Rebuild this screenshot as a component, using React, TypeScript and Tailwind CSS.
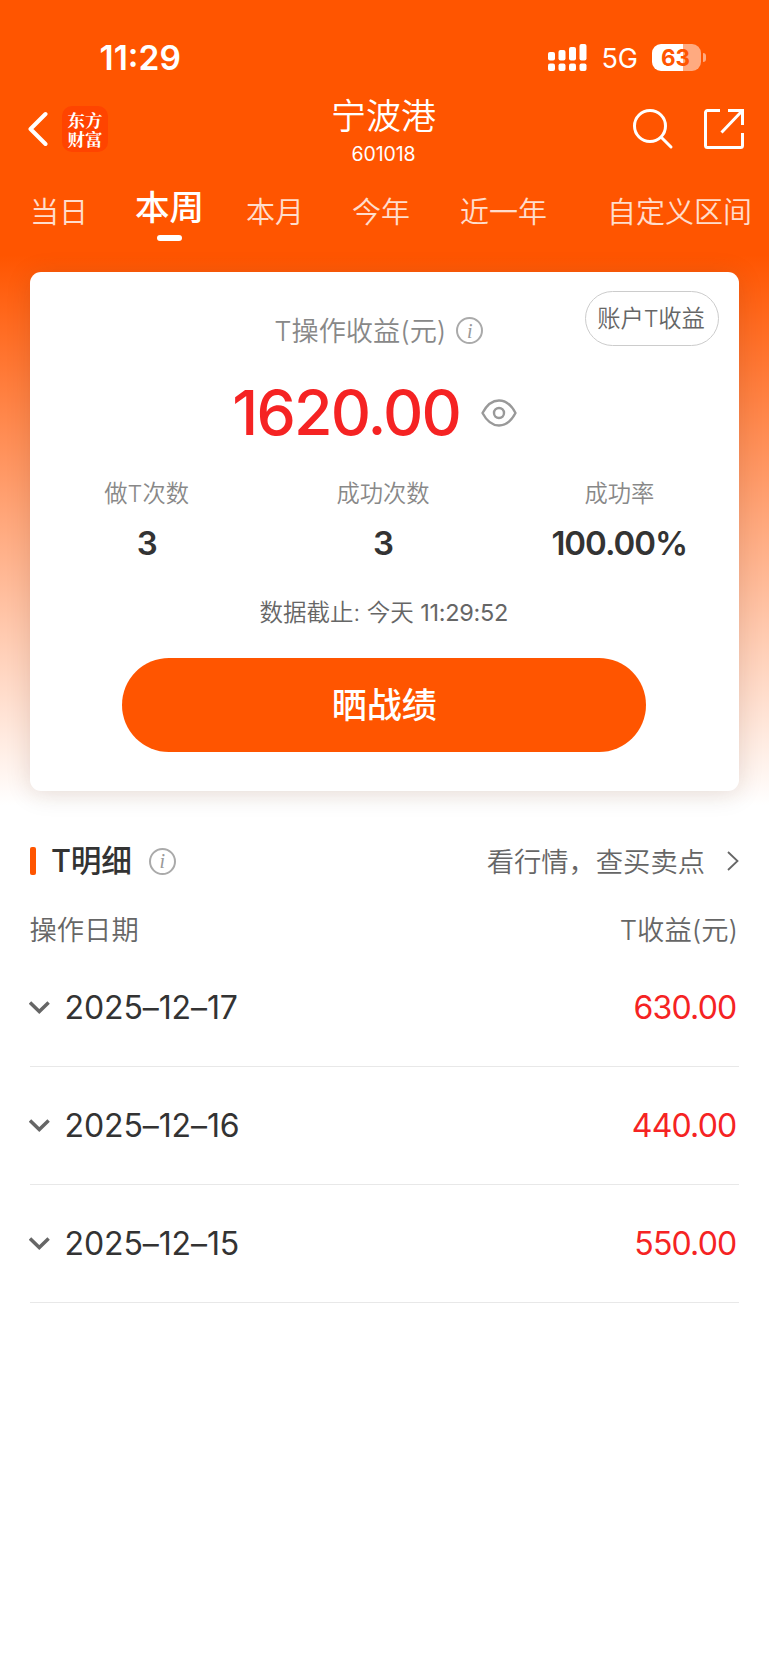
type Tab = { label: string; left: string };

const TABS: Tab[] = [
  { label: "当日", left: "ml-[30px]" },
  { label: "本周", left: "ml-[47px]" },
  { label: "本月", left: "ml-[42px]" },
  { label: "今年", left: "ml-[48px]" },
  { label: "近一年", left: "ml-[50px]" },
  { label: "自定义区间", left: "ml-[60px]" },
];

const STATS = [
  { label: "做T次数", value: "3" },
  { label: "成功次数", value: "3" },
  { label: "成功率", value: "100.00%" },
];

const RECORDS = [
  { date: "2025–12–17", profit: "630.00" },
  { date: "2025–12–16", profit: "440.00" },
  { date: "2025–12–15", profit: "550.00" },
];

function SignalIcon() {
  return (
    <svg width="39" height="28" viewBox="0 0 39 28" fill="currentColor">
      <rect x="0" y="8" width="7" height="8.5" rx="2" />
      <rect x="10.5" y="6" width="7" height="10.5" rx="2" />
      <rect x="21" y="3" width="7" height="13.5" rx="2" />
      <rect x="31.5" y="0" width="7" height="16.5" rx="2" />
      <rect x="0" y="19.5" width="7" height="7.5" rx="2" />
      <rect x="10.5" y="19.5" width="7" height="7.5" rx="2" />
      <rect x="21" y="19.5" width="7" height="7.5" rx="2" />
      <rect x="31.5" y="19.5" width="7" height="7.5" rx="2" />
    </svg>
  );
}

function Battery() {
  return (
    <div className="flex items-center gap-[2px]">
      <div className="flex h-[27px] w-[49px] items-center justify-center rounded-[9px] bg-[linear-gradient(to_right,#fff_31px,#ffaa80_31px)] pt-px pr-[2px] text-[22.5px] font-bold leading-none text-[#ff5500]">
        63
      </div>
      <div className="h-[9px] w-[3px] rounded-r-full bg-[#ffaa80]" />
    </div>
  );
}

function StatusBar() {
  return (
    <div className="flex h-[96px] items-center pt-[19px] pl-[99.5px] pr-[63px] text-white">
      <span className="pt-[2px] text-[33.5px] font-semibold leading-none">11:29</span>
      <div className="ml-auto flex items-center">
        <SignalIcon />
        <span className="ml-[14px] mr-[14px] pt-[2px] text-[27px] leading-none">5G</span>
        <Battery />
      </div>
    </div>
  );
}

function TitleBar() {
  return (
    <header className="flex h-[76px] items-center pl-[27px] pr-[24px] text-white">
      <div className="flex w-[200px] items-center pb-[10px]">
        <svg width="21" height="36" viewBox="0 0 21 36" fill="none" stroke="currentColor" strokeWidth="4">
          <path d="M18.500 3 3.500 18 18.500 33" strokeLinecap="round" strokeLinejoin="round" />
        </svg>
        <div className="ml-[14px] flex h-[46px] w-[46px] items-center justify-center rounded-[10px] bg-[#ff4400]">
          <span className="w-[36px] pl-[0.5px] font-['Noto_Serif_CJK_SC','Noto_Sans_CJK_SC',serif] text-[17.5px] font-bold leading-[19px]">
            东方财富
          </span>
        </div>
      </div>
      <div className="flex flex-1 flex-col items-center pr-[5px] pb-[5px]">
        <h1 className="text-[35px] font-[350] leading-[38px]">宁波港</h1>
        <span className="mt-[7px] text-[19.5px] leading-[24px] tracking-[-0.1px]">601018</span>
      </div>
      <div className="flex w-[200px] items-center justify-end pb-[10px]">
        <svg width="42" height="42" viewBox="0 0 42 42" fill="none" stroke="currentColor" strokeWidth="3">
          <circle cx="18" cy="18" r="15.5" />
          <path d="m29.500 29.500 9.500 9.500" strokeLinecap="round" />
        </svg>
        <svg className="ml-[29px]" width="42" height="42" viewBox="0 0 42 42" fill="none" stroke="currentColor" strokeWidth="3">
          <path d="M17 2.500H4.500a2 2 0 0 0-2 2v33a2 2 0 0 0 2 2h33a2 2 0 0 0 2-2V25" />
          <path d="M25 2.500h14.500V17M39 3 18.500 24.500" />
        </svg>
      </div>
    </header>
  );
}

function Tabs({ active }: { active: string }) {
  return (
    <nav className="flex h-[84px] text-white">
      {TABS.map((tab) => (
        <div key={tab.label} className={`flex shrink-0 flex-col items-center ${tab.left}`}>
          {tab.label === active ? (
            <>
              <span className="mt-[15px] text-[34.5px] font-medium leading-[42px]">{tab.label}</span>
              <span className="mt-[6px] h-[6px] w-[25px] rounded-full bg-white" />
            </>
          ) : (
            <span className="mt-[21px] text-[29px] font-[350] leading-[40px] opacity-80">{tab.label}</span>
          )}
        </div>
      ))}
    </nav>
  );
}

function InfoIcon() {
  return (
    <span className="flex h-[27px] w-[27px] items-center justify-center rounded-full border-2 border-[#aaa] font-['Liberation_Serif',serif] text-[20px] italic leading-none text-[#999]">
      i
    </span>
  );
}

function EyeIcon() {
  return (
    <svg width="36" height="28" viewBox="0 0 36 28" fill="none" stroke="#999" strokeWidth="2.4">
      <path d="M1.500 14C6 5.500 11.500 1.500 18 1.500S30 5.500 34.500 14C30 22.500 24.500 26.500 18 26.500S6 22.500 1.500 14Z" strokeLinejoin="round" />
      <circle cx="18" cy="14" r="5" />
    </svg>
  );
}

function SummaryCard() {
  return (
    <section className="relative mr-[30px] ml-[29.5px] flex h-[519.5px] flex-col items-center rounded-[11px] bg-white shadow-[0_3px_24px_rgba(80,40,20,0.15)]">
      <button
        type="button"
        className="absolute top-[19px] right-[20px] flex h-[55px] w-[134px] items-center justify-center rounded-full border border-[#ccc] pt-[3px] pr-[2px] text-[23.3px] font-[350] tracking-[-0.1px] text-[#666]"
      >
        账户T收益
      </button>
      <div className="mt-[39px] flex h-[40px] items-center pr-[11px]">
        <span className="mr-[10px] pt-[3px] text-[27.2px] font-[350] text-[#888]">T操作收益(元)</span>
        <InfoIcon />
      </div>
      <div className="mt-[27px] flex h-[70px] items-center pr-[19px]">
        <span className="mr-[21px] text-[62.5px] font-[550] leading-none tracking-[-1.8px] text-[#f52323]">1620.00</span>
        <EyeIcon />
      </div>
      <div className="mt-[28px] flex w-full pl-[0.5px]">
        {STATS.map((stat) => (
          <div key={stat.label} className="flex w-[236.5px] flex-col items-center pr-[3px]">
            <span className="text-[23.3px] font-[350] leading-[36px] text-[#888]">{stat.label}</span>
            <span className="mt-[11px] text-[33px] font-[560] leading-[40px] tracking-[-1px] text-[#333]">{stat.value}</span>
          </div>
        ))}
      </div>
      <p className="mt-[32px] pr-px text-[23.5px] font-[350] leading-[36px] text-[#666]">
        数据截止: 今天 <span className="font-normal tracking-[-0.3px]">11:29:52</span>
      </p>
      <button
        type="button"
        className="mt-[27px] h-[94px] w-[524px] rounded-full bg-[#ff5500] pt-[2px] text-[35px] font-medium text-white"
      >
        晒战绩
      </button>
    </section>
  );
}

function Details() {
  return (
    <section className="mr-[30px] ml-[29.5px] mt-[50px]">
      <div className="flex h-[40px] items-center">
        <span className="h-[28px] w-[6px] rounded-[2px] bg-[#ff5500]" />
        <h2 className="ml-[15.5px] mr-[17px] pt-px text-[30.7px] font-medium tracking-[-0.2px] text-[#333]">T明细</h2>
        <InfoIcon />
        <a className="ml-auto flex items-center text-[27.3px] font-[350] text-[#666]">
          <span className="pt-[4px]">看行情，查买卖点</span>
          <svg className="ml-[22px]" width="12" height="20" viewBox="0 0 12 20" fill="none" stroke="#666" strokeWidth="1.8">
            <path d="m1 1 9.500 9L1 19" />
          </svg>
        </a>
      </div>
      <div className="mt-[28px] flex h-[40px] items-center justify-between pt-[4px] pr-[1px] text-[27.3px] font-[350] text-[#666]">
        <span>操作日期</span>
        <span>T收益(元)</span>
      </div>
      {RECORDS.map((record) => (
        <div key={record.date} className="flex h-[118px] items-center border-b border-[#e8e8e8] pr-[2.5px] text-[32px]">
          <svg className="-ml-px" width="21" height="14" viewBox="0 0 21 14" fill="none" stroke="#666" strokeWidth="3.5">
            <path d="m1 1.500 9.300 9L19.600 1.500" />
          </svg>
          <span className="ml-[15px] tracking-[-0.1px] text-[#333]">{record.date}</span>
          <span className="ml-auto tracking-[-0.8px] text-[#f52323]">{record.profit}</span>
        </div>
      ))}
    </section>
  );
}

export default function App() {
  return (
    <main className="min-h-[1665px] w-full overflow-hidden bg-white bg-[linear-gradient(to_bottom,#ff5500_255px,#ffffff_805px)] font-[Inter,'Noto_Sans_CJK_SC',sans-serif]">
      <StatusBar />
      <TitleBar />
      <Tabs active="本周" />
      <div className="h-[15.5px]" />
      <SummaryCard />
      <Details />
    </main>
  );
}
